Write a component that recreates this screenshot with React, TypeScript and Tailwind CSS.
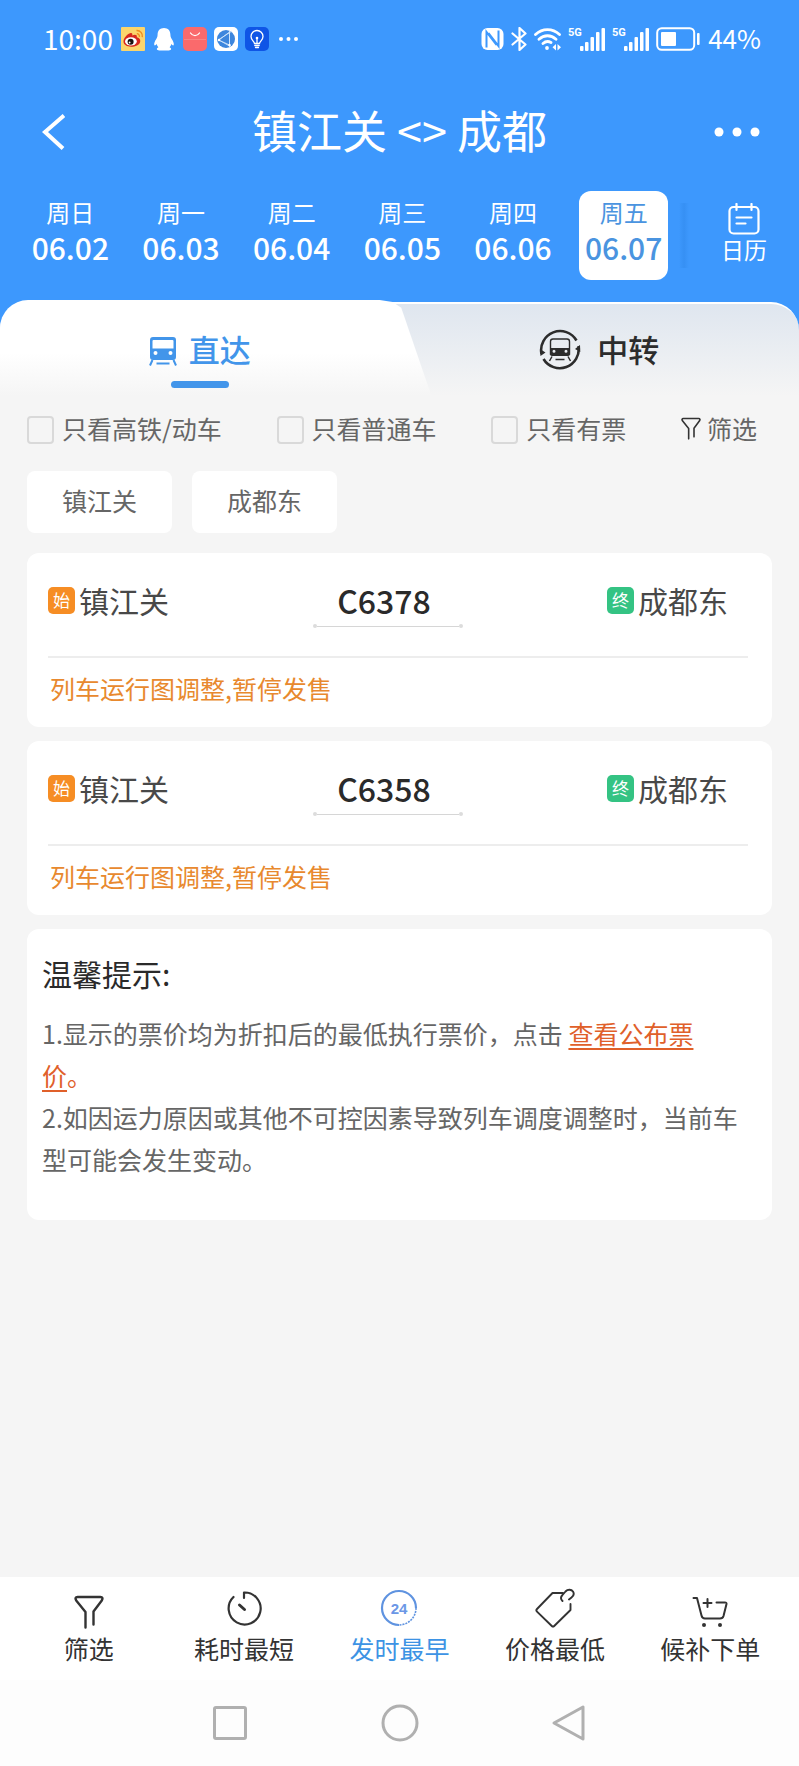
import { useState } from "react";
import clsx from "clsx";

const days = [
  { week: "周日", date: "06.02" },
  { week: "周一", date: "06.03" },
  { week: "周二", date: "06.04" },
  { week: "周三", date: "06.05" },
  { week: "周四", date: "06.06" },
  { week: "周五", date: "06.07" },
];

const filters = ["只看高铁/动车", "只看普通车", "只看有票"];

const trains = [
  { no: "C6378", from: "镇江关", to: "成都东" },
  { no: "C6358", from: "镇江关", to: "成都东" },
];

function AppIcons() {
  return (
    <div className="flex items-center gap-[7px]">
      <svg viewBox="0 0 24 24" className="h-6 w-6">
        <rect width="24" height="24" rx="1" fill="#fbd56c" />
        <path d="M15.5 3.5a5.5 5.5 0 0 1 5.8 6.6M15.8 6.6a2.8 2.8 0 0 1 2.6 3.2" fill="none" stroke="#f08a1c" strokeWidth="1.4" />
        <path d="M9 6.2c1.8-.8 2.9.2 2.2 2.2 2.4-1.1 5.4-1.1 4.6 1.9 2.2.6 3.9 1.9 3.4 4.4-.7 3.2-4.8 5-9 5-4.3 0-7.7-2-7.7-5.2 0-3.2 3.3-7.1 6.5-8.3z" fill="#d8281e" />
        <ellipse cx="9.9" cy="14.4" rx="5.9" ry="4.1" fill="#fff" />
        <circle cx="9.6" cy="14.8" r="3" fill="#1a1010" />
        <circle cx="8.6" cy="15.5" r="0.9" fill="#fff" />
      </svg>
      <svg viewBox="0 0 24 24" className="h-6 w-6">
        <path d="M12 1c-4 0-6.4 2.8-6.4 6.5 0 1.6-.3 2.7-1.3 4.4C2.9 14 1.8 16.2 2.3 18c.5 1 1.5.2 2.3-1 .3 1.3.9 2.4 1.8 3.3-2.4 1-1.9 3.2.9 3.2h9.4c2.8 0 3.3-2.2.9-3.2.9-.9 1.5-2 1.8-3.3.8 1.2 1.8 2 2.3 1 .5-1.800-.6-4-2-6.100-1-1.700-1.300-2.800-1.300-4.400C18.400 3.800 16 1 12 1z" fill="#fff" />
      </svg>
      <svg viewBox="0 0 24 24" className="h-6 w-6">
        <rect width="24" height="24" rx="5" fill="#fa6a6c" />
        <path d="M1 12.5h22" stroke="#f98583" strokeWidth="1" />
        <path d="M7.500 6c2.300 3.500 6.700 3.500 9 0" fill="none" stroke="#fff" strokeWidth="1.3" strokeLinecap="round" />
      </svg>
      <svg viewBox="0 0 24 24" className="h-6 w-6">
        <rect width="24" height="24" rx="5" fill="#fff" />
        <circle cx="12" cy="12" r="9" fill="#3d86dd" />
        <path d="M5 13 15.500 5v14L5 13zM15.500 3.500v17M18 4c-6 4-14 9-14 9s8 3 13 6" fill="none" stroke="#cfe4fb" strokeWidth="0.9" />
        <circle cx="5" cy="13" r="1.2" fill="#fff" />
        <circle cx="15.5" cy="18" r="1.2" fill="#fff" />
      </svg>
      <svg viewBox="0 0 24 24" className="h-6 w-6">
        <rect width="24" height="24" rx="5" fill="#0f55e6" />
        <path d="M9.500 16.500c0-2-3.500-3.300-3.500-7a6 6 0 0 1 12 0c0 3.700-3.500 5-3.500 7zM9.800 18.500h4.400M10.500 20.500h3M12 16.500V11" fill="none" stroke="#fff" strokeWidth="1.3" strokeLinecap="round" />
        <circle cx="12" cy="11" r="1.3" fill="#fff" />
      </svg>
      <svg viewBox="0 0 24 24" className="h-6 w-6" fill="#fff">
        <circle cx="5" cy="12" r="2" />
        <circle cx="12.5" cy="12" r="2" />
        <circle cx="20" cy="12" r="2" />
      </svg>
    </div>
  );
}

function Signal() {
  return (
    <svg viewBox="0 0 37 24" className="h-6 w-[37px]" fill="#fff">
      <text x="0" y="9" fontFamily="Roboto, sans-serif" fontSize="11" fontWeight="700">5G</text>
      <rect x="12" y="19" width="3.5" height="5" rx="1" />
      <rect x="17" y="15" width="3.5" height="9" rx="1" />
      <rect x="22.5" y="10" width="3.5" height="14" rx="1" />
      <rect x="28" y="5" width="3.5" height="19" rx="1" />
      <rect x="33.5" y="1" width="3.5" height="23" rx="1" />
    </svg>
  );
}

function StatusBar() {
  return (
    <div className="flex h-[78px] items-center justify-between pr-[38px] pl-[43px]">
      <div className="flex items-center gap-2">
        <span className="pb-0.5 text-[28px] leading-10">10:00</span>
        <AppIcons />
      </div>
      <div className="flex items-center gap-[7px]">
        <svg viewBox="0 0 23 24" className="h-6 w-[23px]">
          <rect x="0.5" y="1" width="22" height="22" rx="6" fill="#fff" />
          <path d="M5.500 20.500V5l10 13M17.500 3.500V19L7.500 6" fill="none" stroke="#3d98fd" strokeWidth="2" />
        </svg>
        <svg viewBox="0 0 16 24" className="h-6 w-4" fill="none" stroke="#fff" strokeWidth="2.2" strokeLinejoin="round" strokeLinecap="round">
          <path d="m1.500 6.500 13 11L8.500 23V1l6 5.500-13 11" />
        </svg>
        <svg viewBox="0 0 27 24" className="h-6 w-[27px]" fill="none" stroke="#fff" strokeWidth="2.8" strokeLinecap="round">
          <path d="M1.500 7.500c7-6.500 17-6.500 24 0M5 12.200c5-4.600 12-4.600 17 0M9 16.500c2.200-2 5-2.600 8-1" />
          <circle cx="13" cy="21" r="1.9" fill="#fff" stroke="none" />
          <path d="m22 17-3.500 3.300L22 23.500zM23.500 17l3.500 3.300-3.500 3.200z" fill="#fff" stroke="none" />
        </svg>
        <Signal />
        <Signal />
        <svg viewBox="0 0 45 24" className="h-6 w-[45px]">
          <rect x="1.2" y="1.2" width="37" height="21.6" rx="4.5" fill="none" stroke="#fff" strokeWidth="2" />
          <rect x="5" y="5" width="15" height="14" rx="1" fill="#fff" />
          <rect x="41" y="6" width="2.6" height="12" rx="1" fill="#fff" />
        </svg>
        <span className="pb-0.5 text-[26px] leading-10">44%</span>
      </div>
    </div>
  );
}

function TrainIcon({ className }: { className?: string }) {
  return (
    <svg viewBox="0 0 28 30" className={className} fill="currentColor">
      <path
        fillRule="evenodd"
        d="M4 1h20a3 3 0 0 1 3 3v17a3 3 0 0 1-3 3H4a3 3 0 0 1-3-3V4a3 3 0 0 1 3-3zM3.500 5a1 1 0 0 1 1-1h19a1 1 0 0 1 1 1v7.500h-21zM6.500 15a2 2 0 1 0 0 4 2 2 0 0 0 0-4zM21.500 15a2 2 0 1 0 0 4 2 2 0 0 0 0-4z"
      />
      <path d="m3.500 24-2.500 5.500M24.500 24l2.500 5.500M7.500 27.500h13" fill="none" stroke="currentColor" strokeWidth="2" />
    </svg>
  );
}

function TransferIcon() {
  return (
    <svg viewBox="0 0 42 42" className="h-[42px] w-[42px]" fill="none" stroke="currentColor">
      <path d="M2.500 25A19 19 0 0 1 37.500 11.500M39.500 17A19 19 0 0 1 4.500 30" strokeWidth="2.6" />
      <path d="m1 20 .5 7 5-3.500zM36 20l5-4 .3 7z" fill="currentColor" stroke="none" />
      <path d="M14 10h14a2.500 2.500 0 0 1 2.500 2.500V25h-19V12.500A2.500 2.500 0 0 1 14 10z" strokeWidth="1.4" />
      <path fillRule="evenodd" d="M11 19h20v6a2 2 0 0 1-2 2H13a2 2 0 0 1-2-2zM15 20.800a1.500 1.500 0 1 0 0 3 1.500 1.500 0 0 0 0-3zM27 20.800a1.500 1.500 0 1 0 0 3 1.500 1.500 0 0 0 0-3z" fill="currentColor" stroke="none" />
      <path d="m13 27.500-2.500 4.500M29 27.500l2.500 4.500M16.500 30.500h9" strokeWidth="1.500" />
    </svg>
  );
}

function FunnelIcon({ className }: { className?: string }) {
  return (
    <svg viewBox="0 0 30 34" className={className} fill="none" stroke="currentColor" strokeWidth="2.4" strokeLinecap="round" strokeLinejoin="round">
      <path d="M11.500 32.500V17L2.200 5.500C1 3.500 1.500 2 3.500 2h23c2 0 2.500 1.500 1.300 3.500L19.500 16.500v13" />
    </svg>
  );
}

function Header() {
  const [selected, setSelected] = useState("06.07");
  return (
    <header className="bg-[#3d98fd] text-white">
      <StatusBar />
      <div className="flex h-[108px] items-center justify-between pr-[39px] pl-[41px]">
        <button type="button" aria-label="返回" className="w-11">
          <svg viewBox="0 0 24 36" className="h-9 w-6" fill="none" stroke="#fff" strokeWidth="4">
            <path d="M23 1.500 4 18l18 16.500" />
          </svg>
        </button>
        <h1 className="pb-1 text-[45px] leading-[60px]">镇江关 &lt;&gt; 成都</h1>
        <button type="button" aria-label="更多">
          <svg viewBox="0 0 46 10" className="h-2.5 w-[46px]" fill="#fff">
            <circle cx="5" cy="5" r="4.5" />
            <circle cx="23" cy="5" r="4.5" />
            <circle cx="41" cy="5" r="4.5" />
          </svg>
        </button>
      </div>
      <div className="flex pt-[5px] pb-[22px] pl-[15px]">
        <div className="grid flex-1 grid-cols-6 justify-items-center">
          {days.map((d) => (
            <button
              key={d.date}
              type="button"
              onClick={() => setSelected(d.date)}
              className={clsx(
                "flex w-[89px] flex-col items-center rounded-xl pt-[7px] pb-3",
                selected === d.date && "bg-white text-[#4a94e0]"
              )}
            >
              <span className="text-[24px] leading-7">{d.week}</span>
              <span className="text-[30px] leading-[42px] font-medium">{d.date}</span>
            </button>
          ))}
        </div>
        <div className="my-3 w-2.5 bg-linear-to-r from-[#3d98fd] via-[#3690f4] to-[#3d98fd]" />
        <button type="button" className="flex w-[110px] flex-col items-center pt-3">
          <svg viewBox="0 0 32 32" className="h-8 w-8" fill="none" stroke="#fff" strokeWidth="2.2" strokeLinecap="round">
            <rect x="1.5" y="4" width="29" height="26.5" rx="4" />
            <path d="M8.500 1v6M23.500 1v6M14 4h4M8.500 14.500h15M8.500 20.500h9" />
          </svg>
          <span className="text-[23px] leading-7">日历</span>
        </button>
      </div>
    </header>
  );
}

function Tabs() {
  return (
    <div className="bg-linear-to-b from-[#3d98fd] from-50% to-[#f5f5f5] to-50%">
      <div role="tablist" className="relative grid grid-cols-2 rounded-t-[28px] border-t-2 border-white bg-linear-to-b from-[#dfe6ef] to-[#f5f5f5]">
        <span className="absolute -top-1 bottom-0 left-0 w-[54%] rounded-tl-[28px] bg-linear-to-b from-white from-55% to-[#f5f5f5] [clip-path:polygon(0_0,88%_0,91%_2%,93%_8%,100%_100%,0_100%)]" />
        <button type="button" role="tab" aria-selected="true" className="relative flex flex-col items-center pt-[25px] pb-2 text-[#4295ea]">
          <span className="flex items-center gap-3 text-[31px] leading-10 font-medium">
            <TrainIcon className="mt-1 h-[30px] w-7" />
            直达
          </span>
          <span className="mt-3 h-[7px] w-[58px] rounded-sm bg-[#4295ea]" />
        </button>
        <button type="button" role="tab" aria-selected="false" className="flex items-start justify-center gap-4 pt-[25px] text-[31px] leading-10 font-medium text-[#2c2c2c]">
          <TransferIcon />
          中转
        </button>
      </div>
    </div>
  );
}

function TrainCard({ no, from, to }: { no: string; from: string; to: string }) {
  return (
    <article className="rounded-xl bg-white pt-[27px] pr-6 pb-[19px] pl-[21px]">
      <div className="flex items-start justify-between pr-5 text-[30px] leading-10 text-[#484848]">
        <div className="flex items-center gap-1">
          <span className="h-[27px] w-[27px] rounded-[5px] bg-[#f68d24] text-center text-[17px] leading-[26px] text-white">始</span>
          {from}
        </div>
        <div className="w-[150px] text-center">
          <div className="pr-2 text-[32px] font-medium text-[#2a2a2a]">{no}</div>
          <div className="mt-1 flex items-center">
            <span className="h-1 w-1 rounded-full bg-[#dcdcdc]" />
            <span className="h-px flex-1 bg-[#d6d6d6]" />
            <span className="h-1 w-1 rounded-full bg-[#dcdcdc]" />
          </div>
        </div>
        <div className="flex items-center gap-1">
          <span className="h-[27px] w-[27px] rounded-[5px] bg-[#34c383] text-center text-[17px] leading-[26px] text-white">终</span>
          {to}
        </div>
      </div>
      <p className="mt-7 border-t-2 border-[#ededed] pt-2.5 pl-0.5 text-[25px] leading-10 text-[#e8892e]">列车运行图调整,暂停发售</p>
    </article>
  );
}

function Notice() {
  return (
    <section className="rounded-xl bg-white pt-6 pr-[30px] pb-10 pl-[15px]">
      <h2 className="text-[30px] leading-10 text-[#2a2a2a]">温馨提示:</h2>
      <div className="mt-[19px] text-[25px] leading-[42px] text-[#666]">
        <p>
          1.显示的票价均为折扣后的最低执行票价，点击{" "}
          <span className="text-[#e0602a]">
            <a href="#price" className="underline decoration-2 underline-offset-4">查看公布票价</a>。
          </span>
        </p>
        <p>2.如因运力原因或其他不可控因素导致列车调度调整时，当前车型可能会发生变动。</p>
      </div>
    </section>
  );
}

const sorts = [
  { label: "筛选", icon: <FunnelIcon className="mt-2 h-[34px] w-[30px]" /> },
  {
    label: "耗时最短",
    icon: (
      <svg viewBox="0 0 36 36" className="h-9 w-9" fill="none" stroke="currentColor" strokeWidth="2.2" strokeLinecap="round">
        <path d="M7.500 7A16 16 0 1 0 18 2.500V8" strokeLinejoin="round" />
        <path d="m13.500 15 5 4.500" strokeWidth="3" />
      </svg>
    ),
  },
  {
    label: "发时最早",
    active: true,
    icon: (
      <svg viewBox="0 0 38 38" className="h-[38px] w-[38px]" fill="none" stroke="#5f93e0" strokeWidth="2.2">
        <path d="M19 36A17 17 0 1 1 36 19" />
        <path d="M36 19A17 17 0 0 1 19 36" strokeDasharray="2 1" strokeWidth="1.6" />
        <text x="19" y="24.5" textAnchor="middle" fontFamily="Liberation Sans, sans-serif" fontSize="15" fontWeight="700" fill="#6b97e6" stroke="none">24</text>
      </svg>
    ),
  },
  {
    label: "价格最低",
    icon: (
      <svg viewBox="0 0 40 40" className="h-10 w-10" fill="none" stroke="currentColor" strokeWidth="1.9" strokeLinecap="round" strokeLinejoin="round">
        <path d="M28 5H17.500L2 21c-.8.8-.8 1.800 0 2.600L16.800 38c.8.8 1.600.8 2.400 0L35.500 22v-6" />
        <path d="M27.500 13c-2-2-2-4 0-6l3-3.500c2.500-2.700 6-2 7.500 0 1.500 2.500.5 4.500-1.500 6L34 11.500" />
      </svg>
    ),
  },
  {
    label: "候补下单",
    icon: (
      <svg viewBox="0 0 36 32" className="mt-2 h-8 w-9" fill="none" stroke="currentColor" strokeWidth="2" strokeLinecap="round" strokeLinejoin="round">
        <path d="M1.500 2H5l4.500 17.500c.6 2.500 1.500 3 3.500 3h15c2 0 3-.7 3.500-2.500L34.500 8c.2-1-.3-1.500-1.500-1.500h-8.500M15.500 3v8M11.500 7h8" />
        <circle cx="12" cy="29" r="2" fill="currentColor" stroke="none" />
        <circle cx="28" cy="29" r="2" fill="currentColor" stroke="none" />
      </svg>
    ),
  },
];

export default function App() {
  return (
    <div className="flex min-h-screen flex-col bg-[#f5f5f5] font-['Noto_Sans_CJK_SC',sans-serif]">
      <Header />
      <Tabs />
      <main className="flex-1 px-[27px] pt-3">
        <div className="flex items-center justify-between pr-[15px] text-[25px] leading-10 text-[#666]">
          {filters.map((f) => (
            <label key={f} className="flex items-center gap-2">
              <input type="checkbox" className="mt-1 h-7 w-[27px] appearance-none rounded-sm border-2 border-[#d9d9d9] checked:bg-[#3d98fd]" />
              {f}
            </label>
          ))}
          <button type="button" className="flex items-center gap-1.5">
            <FunnelIcon className="h-[23px] w-5 text-[#333]" />
            筛选
          </button>
        </div>
        <div className="mt-[23px] flex gap-5 text-[25px] leading-[58px] text-[#666]">
          <button type="button" className="w-[145px] rounded-lg bg-white pb-1">镇江关</button>
          <button type="button" className="w-[145px] rounded-lg bg-white pb-1">成都东</button>
        </div>
        <div className="mt-5 flex flex-col gap-3.5">
          {trains.map((t) => (
            <TrainCard key={t.no} {...t} />
          ))}
          <Notice />
        </div>
      </main>
      <nav className="grid grid-cols-5 bg-white px-[11px] pt-[11px] pb-[17px] text-[#333]">
        {sorts.map((s) => (
          <button key={s.label} type="button" className={clsx("flex flex-col items-center", s.active && "text-[#3d93e4]")}>
            <span className="flex h-10 items-center">{s.icon}</span>
            <span className="mt-[5px] text-[25px] leading-[30px]">{s.label}</span>
          </button>
        ))}
      </nav>
      <div className="flex h-[86px] items-center justify-center gap-[132px] bg-[#fdfdfd]">
        <button type="button" aria-label="最近任务">
          <svg viewBox="0 0 38 38" className="h-[38px] w-[38px]" fill="none" stroke="#b0b0b0" strokeWidth="3">
            <rect x="3.5" y="3.5" width="31" height="31" rx="1.5" />
          </svg>
        </button>
        <button type="button" aria-label="主屏幕">
          <svg viewBox="0 0 38 38" className="h-[38px] w-[38px]" fill="none" stroke="#b0b0b0" strokeWidth="3">
            <circle cx="19" cy="19" r="17" />
          </svg>
        </button>
        <button type="button" aria-label="后退">
          <svg viewBox="0 0 38 38" className="h-[38px] w-[38px]" fill="none" stroke="#b0b0b0" strokeWidth="3" strokeLinejoin="round">
            <path d="M32 3v32L3 19z" />
          </svg>
        </button>
      </div>
    </div>
  );
}
